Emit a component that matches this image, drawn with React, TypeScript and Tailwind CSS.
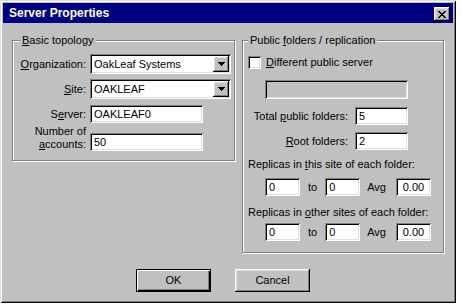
import React from "react";

const sunken =
  "shadow-[inset_1px_1px_0_#808080,inset_-1px_-1px_0_#ffffff,inset_2px_2px_0_#000000,inset_-2px_-2px_0_#dfdfdf]";
const raised =
  "shadow-[inset_-1px_-1px_0_#000000,inset_1px_1px_0_#ffffff,inset_-2px_-2px_0_#808080,inset_2px_2px_0_#dfdfdf]";

function Field({ value, className, disabled }: { value?: string; className: string; disabled?: boolean }) {
  return (
    <div
      className={`${sunken} ${disabled ? "bg-[#c0c0c0]" : "bg-white"} flex items-center pl-[4px] leading-[13px] ${className}`}
    >
      {value}
    </div>
  );
}

function Arrow() {
  return (
    <svg width="7" height="4" viewBox="0 0 7 4" shapeRendering="crispEdges">
      <rect x="0" y="0" width="7" height="1" fill="#000" />
      <rect x="1" y="1" width="5" height="1" fill="#000" />
      <rect x="2" y="2" width="3" height="1" fill="#000" />
      <rect x="3" y="3" width="1" height="1" fill="#000" />
    </svg>
  );
}

function Combo({ value, className }: { value: string; className: string }) {
  return (
    <div className={`${sunken} bg-white flex items-center h-[20px] pl-[4px] pr-[2px] ${className}`}>
      <span className="flex-1 leading-[13px]">{value}</span>
      <div className={`${raised} bg-[#c0c0c0] w-[16px] h-[16px] flex items-center justify-center`}>
        <Arrow />
      </div>
    </div>
  );
}

function CloseGlyph() {
  const rows = ["XX....XX", ".XX..XX.", "..XXXX..", "...XX...", "..XXXX..", ".XX..XX.", "XX....XX"];
  return (
    <svg width="8" height="7" viewBox="0 0 8 7" shapeRendering="crispEdges">
      {rows.map((r, y) =>
        r.split("").map((c, x) => (c === "X" ? <rect key={`${x}-${y}`} x={x} y={y} width="1" height="1" fill="#000" /> : null))
      )}
    </svg>
  );
}

export default function App() {
  return (
    <div className="w-[461px] h-[308px] bg-white font-['Liberation_Sans',Arial,sans-serif] text-[11px] text-black">
      <div className="w-[456px] h-[303px] bg-[#c0c0c0] p-[3px] flex flex-col shadow-[inset_1px_1px_0_#dfdfdf,inset_-1px_-1px_0_#000000,inset_2px_2px_0_#ffffff,inset_-2px_-2px_0_#808080]">
        {/* Title bar */}
        <div className="h-[20px] bg-[#000080] flex items-center justify-between pl-[6px] pr-[3px]">
          <span className="text-white font-bold text-[12px] leading-[14px]">Server Properties</span>
          <div className={`${raised} bg-[#c0c0c0] w-[16px] h-[14px] flex items-center justify-center mt-[2px]`}>
            <CloseGlyph />
          </div>
        </div>

        {/* Groups */}
        <div className="flex items-start gap-[7px] pl-[9px] mt-[17px]">
          {/* Basic topology */}
          <div className="relative w-[223px] border border-[#808080] shadow-[inset_1px_1px_0_#ffffff,1px_1px_0_#ffffff] pt-[13px] pb-[9px]">
            <span className="absolute -top-[7px] left-[7px] px-[2px] bg-[#c0c0c0] leading-[13px]">
              <u>B</u>asic topology
            </span>
            <div className="flex items-center h-[20px]">
              <span className="w-[73px] text-right">
                <u>O</u>rganization:
              </span>
              <Combo value="OakLeaf Systems" className="ml-[4px] w-[141px]" />
            </div>
            <div className="flex items-center h-[20px] mt-[5px]">
              <span className="w-[73px] text-right">
                <u>S</u>ite:
              </span>
              <Combo value="OAKLEAF" className="ml-[4px] w-[141px]" />
            </div>
            <div className="flex items-center h-[18px] mt-[6px]">
              <span className="w-[73px] text-right">
                S<u>e</u>rver:
              </span>
              <Field value="OAKLEAF0" className="ml-[4px] w-[113px] h-[18px]" />
            </div>
            <div className="flex items-end mt-[2px]">
              <span className="w-[73px] text-right leading-[13px]">
                Number of
                <br />
                <u>a</u>ccounts:
              </span>
              <Field value="50" className="ml-[4px] w-[113px] h-[18px]" />
            </div>
          </div>

          {/* Public folders / replication */}
          <div className="relative w-[202px] border border-[#808080] shadow-[inset_1px_1px_0_#ffffff,1px_1px_0_#ffffff] pt-[14px] pb-[11px]">
            <span className="absolute -top-[7px] left-[5px] px-[2px] bg-[#c0c0c0] leading-[13px]">
              Public <u>f</u>olders / replication
            </span>
            <div className="flex items-center h-[15px] pl-[5px]">
              <div className={`${sunken} bg-white w-[13px] h-[13px]`} />
              <span className="ml-[5px]">
                <u>D</u>ifferent public server
              </span>
            </div>
            <Field disabled className="ml-[22px] mt-[10px] w-[143px] h-[19px]" />
            <div className="w-[165px] mt-[8px] flex items-center justify-end">
              <span className="whitespace-nowrap">
                Total <u>p</u>ublic folders:
              </span>
              <Field value="5" className="ml-[7px] w-[53px] h-[18px]" />
            </div>
            <div className="w-[165px] mt-[7px] flex items-center justify-end">
              <span className="whitespace-nowrap">
                <u>R</u>oot folders:
              </span>
              <Field value="2" className="ml-[7px] w-[53px] h-[18px]" />
            </div>
            <div className="pl-[5px] mt-[8px] leading-[13px] whitespace-nowrap">
              Replicas in <u>t</u>his site of each folder:
            </div>
            <div className="ml-[22px] mt-[7px] flex items-center">
              <Field value="0" className="w-[35px] h-[18px]" />
              <span className="ml-[8px]">to</span>
              <Field value="0" className="ml-[8px] w-[35px] h-[18px]" />
              <span className="ml-[7px]">Avg</span>
              <div className={`${sunken} bg-white ml-[10px] w-[35px] h-[18px] flex items-center justify-center`}>0.00</div>
            </div>
            <div className="pl-[5px] mt-[10px] leading-[13px] whitespace-nowrap">
              Replicas in <u>o</u>ther sites of each folder:
            </div>
            <div className="ml-[22px] mt-[4px] flex items-center">
              <Field value="0" className="w-[35px] h-[18px]" />
              <span className="ml-[8px]">to</span>
              <Field value="0" className="ml-[8px] w-[35px] h-[18px]" />
              <span className="ml-[7px]">Avg</span>
              <div className={`${sunken} bg-white ml-[10px] w-[35px] h-[18px] flex items-center justify-center`}>0.00</div>
            </div>
          </div>
        </div>

        {/* Buttons */}
        <div className="flex ml-[133px] mt-[16px]">
          <div className="w-[75px] h-[23px] border border-black bg-[#c0c0c0] shadow-[inset_1px_1px_0_#ffffff,inset_-1px_-1px_0_#000000,inset_-2px_-2px_0_#808080] flex items-center justify-center">
            OK
          </div>
          <div className={`${raised} ml-[24px] w-[75px] h-[23px] bg-[#c0c0c0] flex items-center justify-center`}>
            Cancel
          </div>
        </div>
      </div>
    </div>
  );
}
